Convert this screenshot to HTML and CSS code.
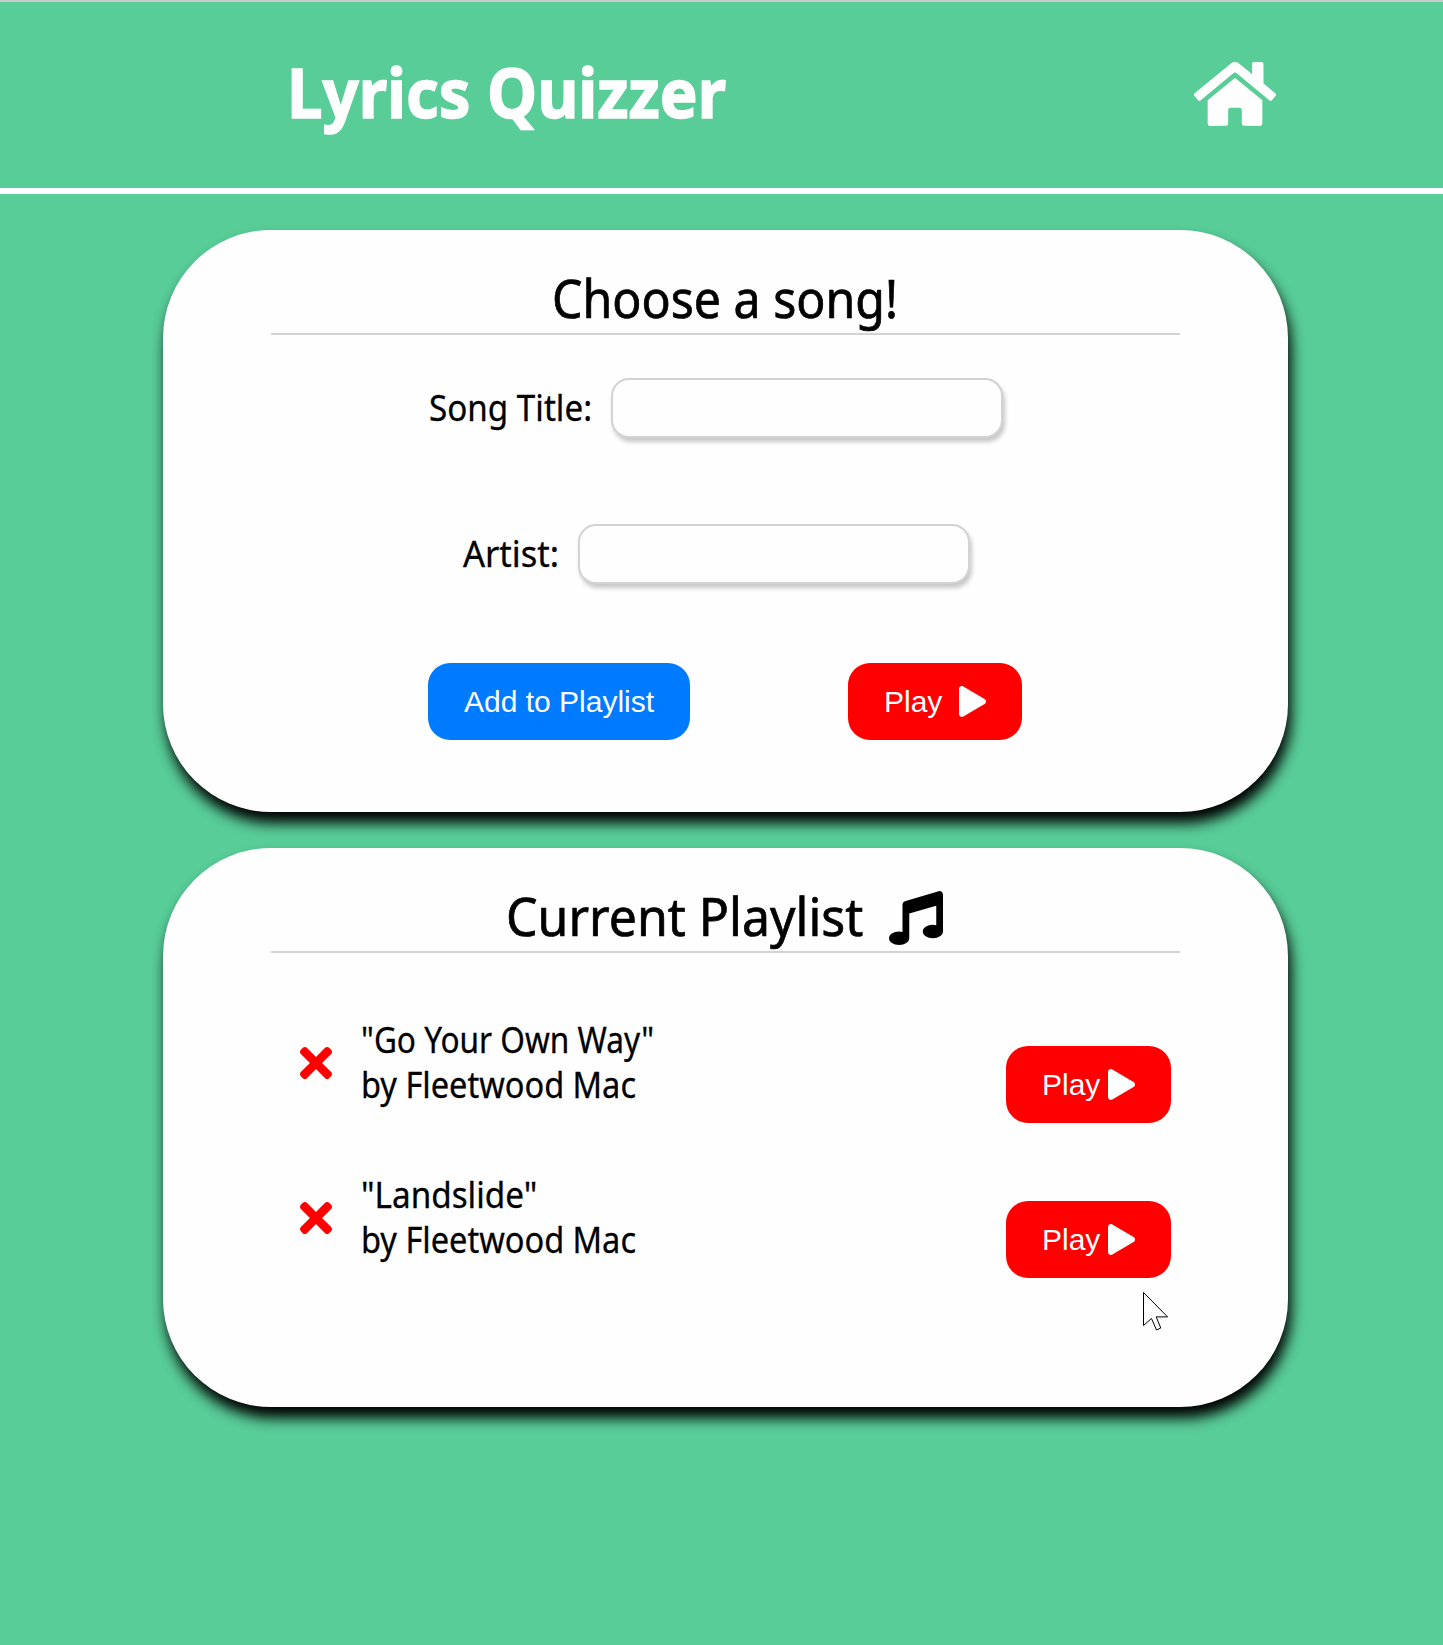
FILE: index.html
```html
<!DOCTYPE html>
<html lang="en">
<head>
<meta charset="utf-8">
<title>Lyrics Quizzer</title>
<link rel="stylesheet" href="styles.css">
</head>
<body>
<svg class="sprite" aria-hidden="true">
  <symbol id="play" viewBox="0 0 448 512"><path d="M424.4 214.7L72.4 6.6C43.8-10.3 0 6.1 0 47.9V464c0 37.5 40.7 60.1 72.4 41.3l352-208c31.4-18.5 31.5-64.1 0-82.6z"/></symbol>
  <symbol id="times" viewBox="0 80 352 352"><path d="M242.72 256l100.07-100.07c12.28-12.28 12.28-32.19 0-44.48l-22.24-22.24c-12.28-12.28-32.19-12.28-44.48 0L176 189.28 75.93 89.21c-12.28-12.28-32.19-12.28-44.48 0L9.21 111.45c-12.28 12.28-12.28 32.19 0 44.48L109.28 256 9.21 356.07c-12.28 12.28-12.28 32.19 0 44.48l22.24 22.24c12.28 12.28 32.2 12.28 44.48 0L176 322.72l100.07 100.07c12.28 12.28 32.2 12.28 44.48 0l22.24-22.24c12.28-12.28 12.28-32.19 0-44.48L242.72 256z"/></symbol>
</svg>
<header class="header">
  <h1 class="brand"><span class="narrow brand-name">Lyrics Quizzer</span></h1>
  <a class="home" aria-label="Home"><svg viewBox="0 32 576 448"><path d="M280.37 148.26L96 300.11V464a16 16 0 0 0 16 16l112.06-.29a16 16 0 0 0 15.92-16V368a16 16 0 0 1 16-16h64a16 16 0 0 1 16 16v95.64a16 16 0 0 0 16 16.05L464 480a16 16 0 0 0 16-16V300L295.67 148.26a12.19 12.19 0 0 0-15.3 0zM571.6 251.47L488 182.56V44.05a12 12 0 0 0-12-12h-56a12 12 0 0 0-12 12v72.61L318.47 43a48 48 0 0 0-61 0L4.34 251.47a12 12 0 0 0-1.6 16.9l25.5 31A12 12 0 0 0 45.15 301l235.22-193.74a12.19 12.19 0 0 1 15.3 0L530.9 301a12 12 0 0 0 16.9-1.6l25.5-31a12 12 0 0 0-1.7-16.93z"/></svg></a>
</header>
<main class="main">
  <section class="card card-form">
    <h2 class="heading"><span class="narrow heading-choose">Choose a song!</span></h2>
    <form class="form">
      <div class="field"><label for="title" class="narrow label-title">Song Title:</label><input id="title" class="input" type="text"></div>
      <div class="field"><label for="artist" class="narrow label-artist">Artist:</label><input id="artist" class="input" type="text"></div>
      <div class="actions">
        <button type="button" class="btn btn-add">Add to Playlist</button>
        <button type="button" class="btn btn-play btn-wide"><span>Play</span><svg class="play"><use href="#play"/></svg></button>
      </div>
    </form>
  </section>
  <section class="card card-list">
    <h2 class="heading"><span class="narrow heading-current">Current Playlist</span><svg class="note" viewBox="0 0 512 512"><path d="M470.38 1.51L150.41 96A32 32 0 0 0 128 126.51v261.41A139 139 0 0 0 96 384c-53 0-96 28.66-96 64s43 64 96 64 96-28.66 96-64V214.32l256-75v184.61a138.4 138.4 0 0 0-32-3.93c-53 0-96 28.66-96 64s43 64 96 64 96-28.65 96-64V32a32 32 0 0 0-41.62-30.49z"/></svg></h2>
    <ul class="songs">
      <li class="song">
        <svg class="remove"><use href="#times"/></svg>
        <p class="song-text"><span class="narrow song-go">"Go Your Own Way"</span><span class="narrow song-by">by Fleetwood Mac</span></p>
        <button type="button" class="btn btn-play"><span>Play</span><svg class="play"><use href="#play"/></svg></button>
      </li>
      <li class="song">
        <svg class="remove"><use href="#times"/></svg>
        <p class="song-text"><span class="narrow song-land">"Landslide"</span><span class="narrow song-by">by Fleetwood Mac</span></p>
        <button type="button" class="btn btn-play"><span>Play</span><svg class="play"><use href="#play"/></svg></button>
      </li>
    </ul>
  </section>
</main>
<svg class="cursor" viewBox="0 0 26 39"><path d="M.5.5V33.5L8.5 26.5 13.5 38 17.8 36 13.2 24.9H24.6Z"/></svg>
</body>
</html>
```
FILE: styles.css
```css
* { box-sizing: border-box; }
body {
  margin: 0;
  min-height: 1645px;
  border-top: 2px solid #c9cccb;
  background: #58cd98;
  color: #000;
  font-family: "Noto Sans", "Open Sans", sans-serif;
}
.sprite { display: none; }
.header {
  height: 192px;
  border-bottom: 6px solid #fefefe;
  padding: 0 167px 2px 287px;
  display: flex;
  align-items: center;
  justify-content: space-between;
}
/* Slightly condensed display text */
.narrow {
  display: block;
  flex: none;
  white-space: nowrap;
  transform-origin: 0 50%;
  -webkit-text-stroke: .3px currentColor;
}
.brand {
  margin: 0;
  padding-bottom: 6px;
  color: #fefefe;
  font-size: 69px;
  font-weight: 700;
  line-height: 90px;
}
.brand-name { width: 440px; transform: scaleX(.919); -webkit-text-stroke-width: 1.5px; }
.home { width: 82px; height: 64px; display: block; }
.home svg { display: block; width: 100%; height: 100%; fill: #fefefe; }
.main {
  padding: 36px 155px 0 163px;
  display: flex;
  flex-direction: column;
  gap: 36px;
}
.card {
  padding: 36px 108px;
  border-radius: 108px;
  background: #fefefe;
  box-shadow: 3px 11px 14px #000;
}
.card-form { height: 582px; }
.card-list { height: 559px; }
.heading {
  margin: 0;
  height: 69px;
  border-bottom: 2px solid #d3d3d3;
  display: flex;
  align-items: center;
  justify-content: center;
  font-size: 52px;
  font-weight: 400;
  line-height: 64px;
}
.heading .narrow { padding-bottom: 4px; -webkit-text-stroke-width: .7px; }
.heading-choose { width: 348px; transform: scaleX(.928); }
.heading-current { width: 358px; transform: scaleX(.961); }
.note { width: 54px; height: 54px; margin: 0 3px 0 25px; }
.form { padding-top: 43px; }
.field {
  height: 60px;
  margin-bottom: 86px;
  display: flex;
  align-items: center;
  justify-content: center;
  gap: 18px;
  font-size: 36px;
  padding-right: 19px;
}
.field .narrow { padding-bottom: 2px; }
.label-title { width: 164px; transform: scaleX(.922); }
.label-artist { width: 97px; transform: scaleX(.96); }
.input {
  width: 392px;
  height: 60px;
  border: 2px solid #d3d3d3;
  border-radius: 18px;
  background: #fefefe;
  box-shadow: 2px 4px 4px #c8c8c8;
}
.actions {
  display: flex;
  margin-top: -7px;
  padding-left: 157px;
  gap: 158px;
}
.btn {
  height: 77px;
  border: 0;
  border-radius: 22px;
  padding: 0 36px;
  display: flex;
  align-items: center;
  color: #fefefe;
  white-space: nowrap;
  font: 30px "Liberation Sans", Arial, sans-serif;
}
.btn-add { width: 262px; background: #007bff; }
.btn-play { width: 165px; background: #f00; gap: 8px; }
.btn-wide { width: 174px; gap: 17px; }
.play { width: 27px; height: 31px; flex: none; fill: #fefefe; }
.songs {
  margin: 0;
  padding: 65px 9px 0 29px;
  list-style: none;
}
.song { height: 155px; display: flex; align-items: flex-start; }
.remove { width: 32px; height: 32px; margin-top: 29px; fill: #f00; }
.song-text {
  margin: -1px auto 0 29px;
  font-size: 36px;
  line-height: 45px;
}
.song-go { width: 297px; transform: scaleX(.877); }
.song-by { width: 277px; transform: scaleX(.904); }
.song-land { width: 179px; transform: scaleX(.924); }
.song .btn { margin-top: 28px; }
.cursor {
  position: absolute;
  left: 1143px;
  top: 1292px;
  width: 26px;
  height: 39px;
  fill: #fefefe;
  stroke: #000;
  stroke-width: 1;
}
```
